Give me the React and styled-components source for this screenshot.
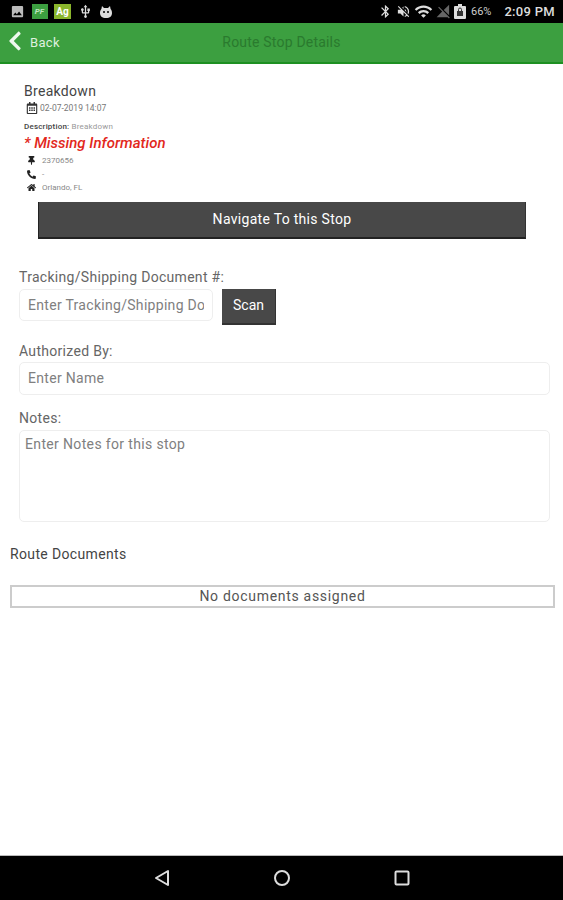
import React from 'react';
import styled, { createGlobalStyle } from 'styled-components';
import { FaRegCalendarAlt, FaThumbtack, FaPhoneAlt, FaHome, FaChevronLeft } from 'react-icons/fa';
import { MdBluetooth, MdVolumeOff, MdWifi, MdSignalCellularOff, MdUsb, MdPhoto } from 'react-icons/md';

const GlobalStyle = createGlobalStyle`
  html, body { margin: 0; padding: 0; background: #fff; }
  * { box-sizing: border-box; }
  body { font-family: Roboto, "Liberation Sans", sans-serif; }
`;

const Screen = styled.div`
  width: 563px;
  height: 900px;
  display: flex;
  flex-direction: column;
  overflow: hidden;
`;

const StatusBar = styled.div`
  height: 23px;
  background: #000;
  display: flex;
  align-items: center;
  justify-content: space-between;
  padding: 0 8px 0 10px;
  color: #ddd;
`;

const StatusGroup = styled.div`
  display: flex;
  align-items: center;
  gap: ${(p) => p.$gap || 5}px;
`;

const Badge = styled.span`
  width: ${(p) => p.$w}px;
  height: 15px;
  display: flex;
  align-items: center;
  justify-content: center;
  background: ${(p) => p.$bg};
  color: ${(p) => p.$fg};
  font-size: ${(p) => p.$size}px;
  font-weight: 700;
  font-style: ${(p) => (p.$italic ? 'italic' : 'normal')};
`;

const Percent = styled.span`
  font-size: 11px;
  color: #ccc;
  margin-left: 2px;
`;

const Clock = styled.span`
  font-size: 13px;
  font-weight: 500;
  color: #ddd;
  letter-spacing: 0.3px;
  margin-left: 10px;
`;

const Header = styled.div`
  height: 41px;
  background: #3c9f40;
  border-bottom: 2px solid #1d9022;
  display: flex;
  align-items: center;
  position: relative;
  flex-shrink: 0;
`;

const BackLink = styled.div`
  display: flex;
  align-items: center;
  gap: 8px;
  padding-left: 8px;
  color: #dff0df;
  font-size: 13px;
  letter-spacing: 0.3px;
  z-index: 1;
`;

const BackChevron = styled(FaChevronLeft)`
  width: 14px;
  height: 22px;
  margin-top: -3px;
  color: #eef8ee;
`;

const HeaderTitle = styled.div`
  position: absolute;
  left: 0;
  right: 0;
  padding-bottom: 2px;
  text-align: center;
  font-size: 14px;
  color: #2a7a2e;
  letter-spacing: 0.2px;
`;

const Main = styled.div`
  flex: 1;
  background: #fff;
  display: flex;
  flex-direction: column;
`;

const Details = styled.div`
  padding: 19px 0 0 24px;
  display: flex;
  flex-direction: column;
  color: #555;
`;

const StopTitle = styled.div`
  font-size: 14px;
  line-height: 17px;
  color: #444;
  letter-spacing: 0.3px;
`;

const DateRow = styled.div`
  display: flex;
  align-items: center;
  gap: 2px;
  margin-left: 2px;
  height: 14px;
  margin-top: 1px;
  font-size: 8.5px;
  color: #777;
`;

const Description = styled.div`
  font-size: 8px;
  line-height: 10px;
  margin-top: 7px;
  color: #999;
  letter-spacing: 0.2px;
`;

const DescriptionLabel = styled.span`
  color: #444;
  font-weight: 500;
`;

const Missing = styled.div`
  font-size: 15px;
  line-height: 17px;
  margin-top: 3px;
  font-style: italic;
  font-weight: 500;
  color: #e2281c;
`;

const InfoRow = styled.div`
  display: flex;
  align-items: center;
  gap: 6px;
  height: 13.5px;
  margin-left: 3px;
  font-size: 8px;
  color: #888;
  svg { color: #222; width: 9px; flex-shrink: 0; }
`;

const InfoRows = styled.div`
  display: flex;
  flex-direction: column;
  margin-top: 2px;
`;

const NavigateButton = styled.button`
  display: block;
  width: 488px;
  height: 37px;
  margin: 7px 0 0 38px;
  border: none;
  border-bottom: 2px solid #222;
  border-left: 1px solid #222;
  border-right: 1px solid #333;
  background: #484848;
  color: #fff;
  font-family: inherit;
  font-size: 14px;
  letter-spacing: 0.3px;
`;

const Form = styled.div`
  padding: 30px 13px 0 19px;
  display: flex;
  flex-direction: column;
`;

const Label = styled.div`
  font-size: 14px;
  line-height: 16px;
  color: #666;
  letter-spacing: 0.3px;
  margin: ${(p) => p.$top || 0}px 0 ${(p) => p.$bottom ?? 4}px;
`;

const ScanRow = styled.div`
  display: flex;
  align-items: flex-start;
  gap: 9px;
`;

const Input = styled.input`
  width: ${(p) => p.$width || '100%'};
  height: ${(p) => p.$height || 33}px;
  border: 1px solid #eee;
  border-radius: 5px;
  padding: 0 8px;
  font-family: inherit;
  font-size: 14px;
  letter-spacing: 0.3px;
  color: #666;
  outline: none;
  &::placeholder { color: #808080; opacity: 1; }
`;

const NotesArea = styled.textarea`
  display: block;
  width: 100%;
  height: 92px;
  border: 1px solid #eee;
  border-radius: 5px;
  padding: 5px 5px;
  font-family: inherit;
  font-size: 14px;
  letter-spacing: 0.35px;
  resize: none;
  outline: none;
  &::placeholder { color: #808080; opacity: 1; }
`;

const ScanButton = styled.button`
  width: 54px;
  height: 36px;
  border: none;
  border-bottom: 2px solid #333;
  border-right: 1px solid #333;
  background: #484848;
  color: #fff;
  font-family: inherit;
  font-size: 14px;
  padding: 0 0 1px;
`;

const SectionTitle = styled.div`
  font-size: 14px;
  line-height: 16px;
  color: #444;
  letter-spacing: 0.35px;
  margin: 24px 0 0 10px;
`;

const EmptyDocs = styled.div`
  width: 545px;
  height: 23px;
  margin: 23px 0 0 10px;
  border: 2px solid #ccc;
  display: flex;
  align-items: center;
  justify-content: center;
  font-size: 14px;
  color: #555;
  letter-spacing: 0.7px;
`;

const NavBar = styled.div`
  height: 45px;
  flex-shrink: 0;
  background: #000;
  border-top: 1px solid #bbb;
  display: flex;
  align-items: center;
  justify-content: center;
  gap: 102px;
`;

const Droid = () => (
  <svg width="14" height="14" viewBox="0 0 14 14" fill="#ddd">
    <path d="M3 1l2 2h4l2-2 .6 3c.9 1 1.4 2.2 1.4 4 0 3-2 5-6 5S1 11 1 8c0-1.8.5-3 1.400-4z" />
    <circle cx="5" cy="7" r="1" fill="#000" />
    <circle cx="9" cy="7" r="1" fill="#000" />
  </svg>
);

const Battery = () => (
  <svg width="12" height="15" viewBox="0 0 12 15">
    <path d="M4 0h4v2h3a1 1 0 0 1 1 1v11a1 1 0 0 1-1 1H1a1 1 0 0 1-1-1V3a1 1 0 0 1 1-1h3z" fill="#ddd" />
    <rect x="3" y="7" width="6" height="5" fill="#333" />
    <path d="M4.500 7V5.500a1.500 1.500 0 0 1 3 0V7" fill="none" stroke="#333" />
  </svg>
);

const App = () => (
  <>
    <GlobalStyle />
    <Screen>
      <StatusBar>
        <StatusGroup $gap={6.500}>
          <MdPhoto size={15} color="#bbb" />
          <Badge $w={16} $bg="#3c9f40" $fg="#bfe5bf" $size={8} $italic>PF</Badge>
          <Badge $w={17} $bg="#8ab52c" $fg="#fff" $size={10}>Ag</Badge>
          <MdUsb size={15} />
          <Droid />
        </StatusGroup>
        <StatusGroup $gap={3}>
          <MdBluetooth size={15} />
          <MdVolumeOff size={15} />
          <MdWifi size={19} />
          <MdSignalCellularOff size={15} color="#666" />
          <Battery />
          <Percent>66%</Percent>
          <Clock>2:09 PM</Clock>
        </StatusGroup>
      </StatusBar>
      <Header>
        <BackLink>
          <BackChevron />
          Back
        </BackLink>
        <HeaderTitle>Route Stop Details</HeaderTitle>
      </Header>
      <Main>
        <Details>
          <StopTitle>Breakdown</StopTitle>
          <DateRow>
            <FaRegCalendarAlt size={12} color="#333" />
            02-07-2019 14:07
          </DateRow>
          <Description>
            <DescriptionLabel>Description:</DescriptionLabel> Breakdown
          </Description>
          <Missing>* Missing Information</Missing>
          <InfoRows>
            <InfoRow><FaThumbtack size={9} />2370656</InfoRow>
            <InfoRow><FaPhoneAlt size={9} />-</InfoRow>
            <InfoRow><FaHome size={9} />Orlando, FL</InfoRow>
          </InfoRows>
        </Details>
        <NavigateButton>Navigate To this Stop</NavigateButton>
        <Form>
          <Label>Tracking/Shipping Document #:</Label>
          <ScanRow>
            <Input $width="194px" $height={32} placeholder="Enter Tracking/Shipping Document #" />
            <ScanButton>Scan</ScanButton>
          </ScanRow>
          <Label $top={18} $bottom={3}>Authorized By:</Label>
          <Input placeholder="Enter Name" />
          <Label $top={15}>Notes:</Label>
          <NotesArea placeholder="Enter Notes for this stop" />
        </Form>
        <SectionTitle>Route Documents</SectionTitle>
        <EmptyDocs>No documents assigned</EmptyDocs>
      </Main>
      <NavBar>
        <svg width="18" height="18" viewBox="0 0 18 18" fill="none" stroke="#ddd" strokeWidth="2" strokeLinejoin="round">
          <path d="M15 2v14L3 9z" />
        </svg>
        <svg width="18" height="18" viewBox="0 0 18 18" fill="none" stroke="#ddd" strokeWidth="2">
          <circle cx="9" cy="9" r="7" />
        </svg>
        <svg width="18" height="18" viewBox="0 0 18 18" fill="none" stroke="#ddd" strokeWidth="2" strokeLinejoin="round">
          <rect x="2.500" y="2.500" width="13" height="13" rx="1" />
        </svg>
      </NavBar>
    </Screen>
  </>
);

export default App;
